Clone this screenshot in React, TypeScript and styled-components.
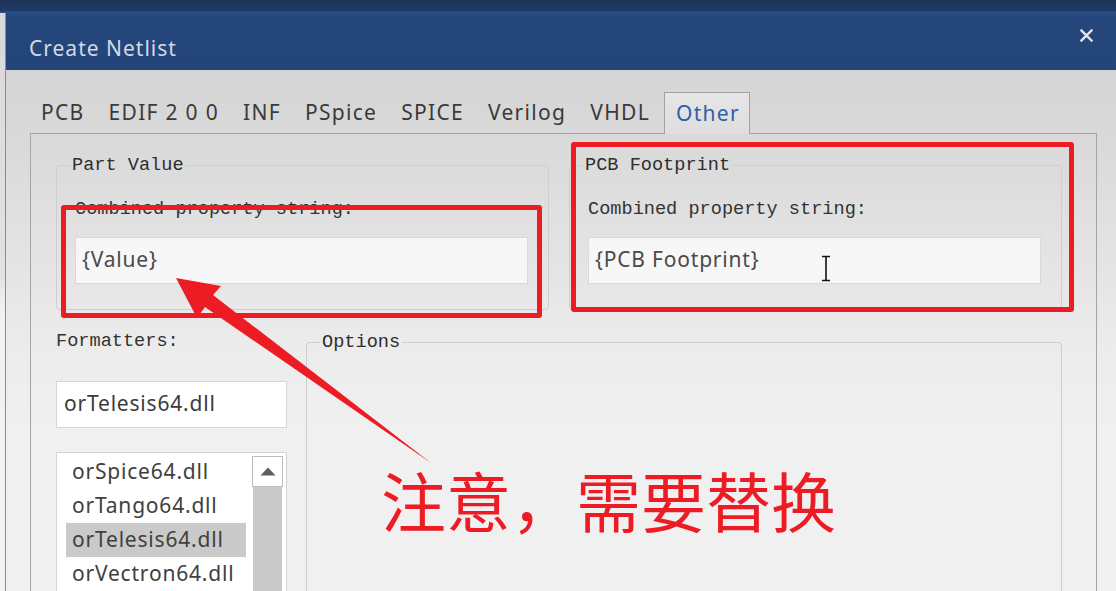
import React from 'react';
import styled, { createGlobalStyle, css } from 'styled-components';

const GlobalStyle = createGlobalStyle`
  *, *::before, *::after { box-sizing: border-box; }
  html, body { margin: 0; padding: 0; width: 1116px; height: 591px; overflow: hidden; background: #1c365e; }
  #root { width: 1116px; height: 591px; }
`;

const Screen = styled.div`
  position: relative;
  width: 1116px;
  height: 591px;
  overflow: hidden;
  display: flex;
  flex-direction: column;
  background: #1c365e;
  font-family: "Noto Sans", "Open Sans", sans-serif;
`;

const TopStrip = styled.div`
  height: 13px;
  flex: none;
  background: linear-gradient(180deg, #1a3258 0%, #1f3b66 80%, #2d5890 100%);
`;

const Workspace = styled.div`
  flex: 1;
  min-height: 0;
  display: flex;
`;

const BackWindow = styled.div`
  width: 6px;
  flex: none;
  background: linear-gradient(180deg, #d9d9d9 0px, #e2e2e2 260px, #f2f2f2 300px);
  border-right: 1px solid #6f8fc4;
  display: flex;
  flex-direction: column;
`;

const BackLine = styled.div<{ $color: string; $gap: number }>`
  height: 2px;
  margin-top: ${(p) => p.$gap}px;
  background: ${(p) => p.$color};
`;

const Dialog = styled.div`
  flex: 1;
  min-width: 0;
  display: flex;
  flex-direction: column;
`;

const TitleBar = styled.div`
  height: 57px;
  flex: none;
  background: linear-gradient(180deg, #294d84 0px, #23467b 4px, #23457a 100%);
  padding: 12px 23px 0 23px;
  display: flex;
  align-items: center;
  justify-content: space-between;
`;

const TitleText = styled.div`
  color: #d4dae4;
  font-size: 21px;
  letter-spacing: 1px;
  line-height: 28px;
`;

const CloseBox = styled.div`
  align-self: flex-start;
  margin-top: 4px;
  width: 13px;
  height: 13px;
  display: flex;
`;

const Body = styled.div`
  flex: 1;
  min-height: 0;
  display: flex;
  flex-direction: column;
  background: linear-gradient(180deg, #d5d5d5 0px, #dadada 80px, #e3e3e3 180px, #ececec 280px, #f0f0f0 360px);
`;

const TabRow = styled.div`
  height: 63px;
  flex: none;
  padding: 22px 0 0 23px;
  display: flex;
  align-items: flex-end;
  position: relative;
  z-index: 1;
`;

const Tab = styled.div<{ $active?: boolean }>`
  height: 41px;
  padding: 0 12px 2px 12px;
  display: flex;
  align-items: center;
  font-size: 21px;
  letter-spacing: 1.3px;
  color: #3a3a3a;
  white-space: pre;
  ${(p) =>
    p.$active &&
    css`
      height: 42px;
      margin-bottom: -1px;
      margin-left: 2px;
      padding: 0 9px 2px 11px;
      border: 1px solid #a2a2a2;
      border-bottom: none;
      background: linear-gradient(180deg, #e6e6e6, #dedede);
      color: #2f5ea9;
    `}
`;

const Panel = styled.div`
  flex: 1;
  min-height: 0;
  margin: 0 19px 0 24px;
  border: 1px solid #a4a4a4;
  border-bottom: none;
  padding: 21px 34px 0 25px;
  display: flex;
  flex-direction: column;
`;

const GroupRow = styled.div`
  display: grid;
  grid-template-columns: 493px 493px;
  column-gap: 20px;
`;

const Group = styled.fieldset<{ $tall?: boolean }>`
  margin: 0;
  min-width: 0;
  border: 1px solid #cecece;
  border-radius: 4px;
  padding: 24px 20px 25px 18px;
  ${(p) => p.$tall && css`height: 300px;`}
`;

const Legend = styled.legend`
  padding: 1px 2px 0 2px;
  margin-left: -5px;
  font-family: "Liberation Mono", "DejaVu Sans Mono", monospace;
  font-size: 18.6px;
  line-height: 20px;
  color: #2e2e2e;
`;

const MonoLabel = styled.div`
  font-family: "Liberation Mono", "DejaVu Sans Mono", monospace;
  font-size: 18.6px;
  line-height: 20px;
  color: #333333;
  white-space: pre;
`;

const TextField = styled.div<{ $white?: boolean }>`
  height: 47px;
  display: flex;
  align-items: center;
  padding: 0 0 4px 6px;
  border: 1px solid ${(p) => (p.$white ? '#d6d6d6' : '#d9d9d9')};
  background: ${(p) => (p.$white ? '#ffffff' : '#f7f7f7')};
  font-size: 21px;
  letter-spacing: 0.8px;
  color: #4a4a4a;
  white-space: pre;
`;

const PropField = styled(TextField)`
  margin-top: 17px;
`;

const LowerRow = styled.div`
  margin-top: 22px;
  display: grid;
  grid-template-columns: 231px 1fr;
  column-gap: 19px;
`;

const FormatterColumn = styled.div`
  display: flex;
  flex-direction: column;
`;

const FormatterField = styled(TextField)`
  margin-top: 29px;
  padding-left: 7px;
  color: #3c3c3c;
`;

const ListBox = styled.div`
  margin-top: 24px;
  height: 160px;
  border: 1px solid #d4d4d4;
  background: #ffffff;
  display: flex;
  gap: 6px;
  padding: 2px 2px 0 9px;
`;

const Items = styled.div`
  width: 180px;
  display: flex;
  flex-direction: column;
`;

const Item = styled.div<{ $selected?: boolean }>`
  height: 34px;
  flex: none;
  display: flex;
  align-items: center;
  padding: 0 0 2px 6px;
  font-size: 21px;
  letter-spacing: 0.8px;
  color: #404040;
  white-space: pre;
  background: ${(p) => (p.$selected ? '#cacaca' : 'transparent')};
`;

const ScrollBar = styled.div`
  width: 31px;
  margin-top: 1px;
  display: flex;
  flex-direction: column;
`;

const ScrollButton = styled.div`
  height: 31px;
  flex: none;
  border: 1px solid #bdbdbd;
  background: #ffffff;
  display: flex;
  align-items: center;
  justify-content: center;
`;

const ScrollTrack = styled.div`
  flex: 1;
  background: #c9c9c9;
  margin: 0 1px;
`;

const Overlay = styled.div`
  position: absolute;
  inset: 0;
  pointer-events: none;
`;

const RedBox = styled.div<{ $x: number; $y: number; $w: number; $h: number }>`
  position: absolute;
  left: ${(p) => p.$x}px;
  top: ${(p) => p.$y}px;
  width: ${(p) => p.$w}px;
  height: ${(p) => p.$h}px;
  border: 5px solid #ed1c24;
  border-radius: 3px;
`;

const ArrowSvg = styled.svg`
  position: absolute;
  left: 0;
  top: 0;
`;

const Note = styled.div`
  position: absolute;
  left: 381px;
  top: 467px;
  font-family: "Noto Sans CJK SC", "Noto Sans CJK JP", sans-serif;
  font-size: 65px;
  line-height: 1;
  color: #ed1c24;
  white-space: pre;
`;

const Cursor = styled.svg`
  position: absolute;
  left: 820px;
  top: 255px;
`;

const tabs = ['PCB', 'EDIF 2 0 0', 'INF', 'PSpice', 'SPICE', 'Verilog', 'VHDL', 'Other'];
const formatters = ['orSpice64.dll', 'orTango64.dll', 'orTelesis64.dll', 'orVectron64.dll'];

export default function App() {
  return (
    <>
      <GlobalStyle />
      <Screen>
        <TopStrip />
        <Workspace>
          <BackWindow>
            <BackLine $color="#c9c9c9" $gap={40} />
            <BackLine $color="#e02525" $gap={20} />
            <BackLine $color="#b5b5b5" $gap={110} />
            <BackLine $color="#333333" $gap={6} />
            <BackLine $color="#333333" $gap={8} />
            <BackLine $color="#d9a050" $gap={30} />
            <BackLine $color="#2f55d0" $gap={370} />
          </BackWindow>
          <Dialog>
            <TitleBar>
              <TitleText>Create Netlist</TitleText>
              <CloseBox>
                <svg width="13" height="13" viewBox="0 0 13 13">
                  <path d="M1.5 1.5 L11.5 11.5 M11.5 1.5 L1.5 11.5" stroke="#e2e7ef" strokeWidth="2.4" strokeLinecap="square" />
                </svg>
              </CloseBox>
            </TitleBar>
            <Body>
              <TabRow>
                {tabs.map((t) => (
                  <Tab key={t} $active={t === 'Other'}>
                    {t}
                  </Tab>
                ))}
              </TabRow>
              <Panel>
                <GroupRow>
                  <Group>
                    <Legend>Part Value</Legend>
                    <MonoLabel>Combined property string:</MonoLabel>
                    <PropField>{'{Value}'}</PropField>
                  </Group>
                  <Group>
                    <Legend>PCB Footprint</Legend>
                    <MonoLabel>Combined property string:</MonoLabel>
                    <PropField>{'{PCB Footprint}'}</PropField>
                  </Group>
                </GroupRow>
                <LowerRow>
                  <FormatterColumn>
                    <MonoLabel>Formatters:</MonoLabel>
                    <FormatterField $white>orTelesis64.dll</FormatterField>
                    <ListBox>
                      <Items>
                        {formatters.map((f) => (
                          <Item key={f} $selected={f === 'orTelesis64.dll'}>
                            {f}
                          </Item>
                        ))}
                      </Items>
                      <ScrollBar>
                        <ScrollButton>
                          <svg width="16" height="9" viewBox="0 0 16 9">
                            <polygon points="8,0.5 15.5,8.5 0.5,8.5" fill="#5f5f5f" />
                          </svg>
                        </ScrollButton>
                        <ScrollTrack />
                      </ScrollBar>
                    </ListBox>
                  </FormatterColumn>
                  <Group $tall>
                    <Legend>Options</Legend>
                  </Group>
                </LowerRow>
              </Panel>
            </Body>
          </Dialog>
        </Workspace>
        <Overlay>
          <RedBox $x={61} $y={205} $w={481} $h={113} />
          <RedBox $x={571} $y={142} $w={503} $h={170} />
          <ArrowSvg width="1116" height="591" viewBox="0 0 1116 591">
            <polygon
              points="176,278 221,286 213,295 431,463 205,307 197,318"
              fill="#ed1c24"
            />
          </ArrowSvg>
          <Cursor width="12" height="27" viewBox="0 0 12 27">
            <path d="M2 1.5 H10 M6 1.5 V25.5 M2 25.5 H10" stroke="#111" strokeWidth="1.6" fill="none" />
          </Cursor>
          <Note>注意，需要替换</Note>
        </Overlay>
      </Screen>
    </>
  );
}
